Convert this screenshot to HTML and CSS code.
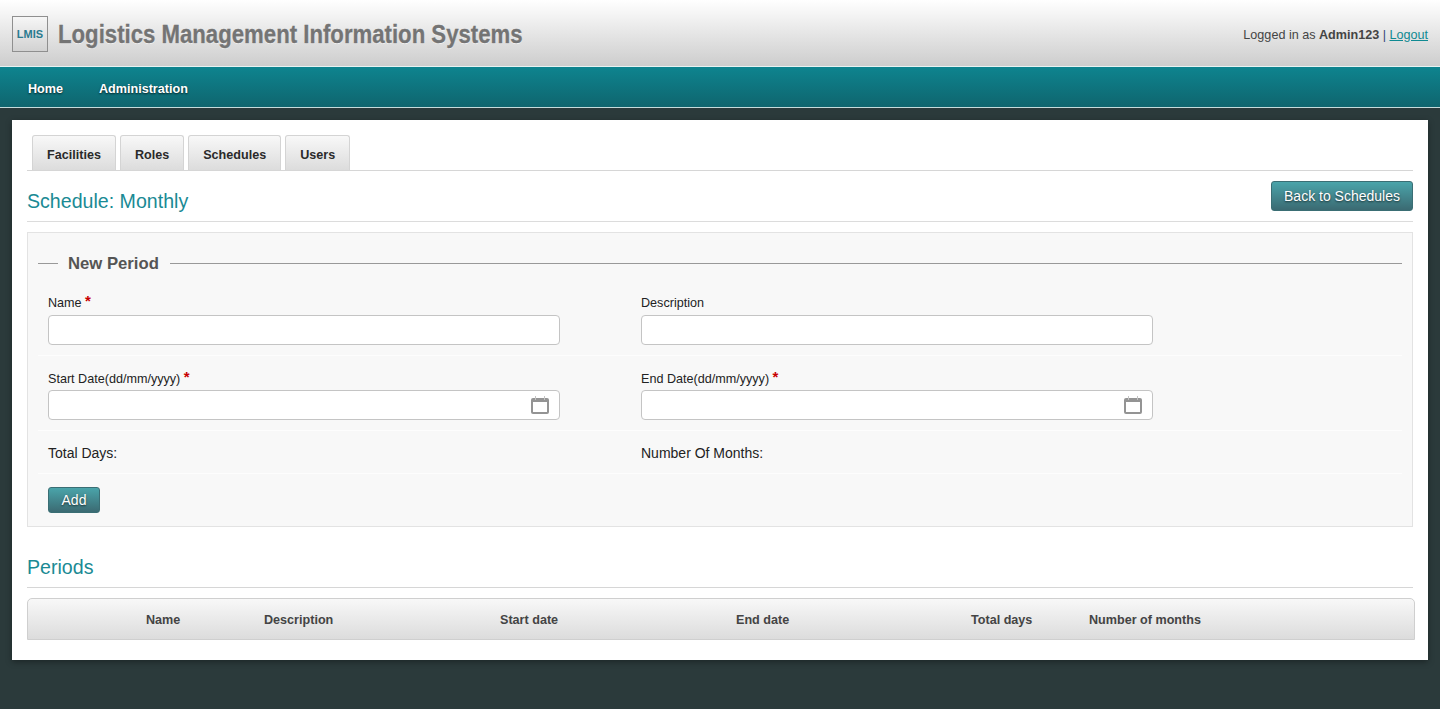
FILE: index.html
```html
<!DOCTYPE html>
<html lang="en">
<head>
<meta charset="utf-8">
<title>Logistics Management Information Systems</title>
<link rel="stylesheet" href="styles.css">
</head>
<body>
<header class="topbar">
  <div class="brand">
    <div class="logo">LMIS</div>
    <h1 class="app-title">Logistics Management Information Systems</h1>
  </div>
  <div class="user">Logged in as <strong>Admin123</strong> <span class="pipe">|</span> <a href="#">Logout</a></div>
</header>
<nav class="mainnav">
  <a href="#">Home</a>
  <a href="#">Administration</a>
</nav>
<main class="card">
  <div class="tabs">
    <a class="tab" href="#">Facilities</a>
    <a class="tab" href="#">Roles</a>
    <a class="tab" href="#">Schedules</a>
    <a class="tab" href="#">Users</a>
  </div>
  <div class="page-head">
    <h2 class="section-title">Schedule: Monthly</h2>
    <button class="btn btn-back" type="button">Back to Schedules</button>
  </div>
  <form class="panel">
    <div class="legend"><span>New Period</span></div>
    <div class="row">
      <div class="col">
        <label class="lbl">Name <b class="req">*</b></label>
        <div class="field"><input type="text"></div>
      </div>
      <div class="col">
        <label class="lbl">Description</label>
        <div class="field"><input type="text"></div>
      </div>
    </div>
    <div class="row">
      <div class="col">
        <label class="lbl">Start Date(dd/mm/yyyy) <b class="req">*</b></label>
        <div class="field"><input type="text">
          <svg class="cal" viewBox="0 0 18 18" width="18" height="18"><path fill="#949494" d="M2 2h14a2 2 0 0 1 2 2v12a2 2 0 0 1-2 2H2a2 2 0 0 1-2-2V4a2 2 0 0 1 2-2z"/><rect x="4" y="0" width="1" height="4" fill="#c4c4c4"/><rect x="13" y="0" width="1" height="4" fill="#c4c4c4"/><rect x="2" y="6" width="14" height="10" fill="#fff"/></svg>
        </div>
      </div>
      <div class="col">
        <label class="lbl">End Date(dd/mm/yyyy) <b class="req">*</b></label>
        <div class="field"><input type="text">
          <svg class="cal" viewBox="0 0 18 18" width="18" height="18"><path fill="#949494" d="M2 2h14a2 2 0 0 1 2 2v12a2 2 0 0 1-2 2H2a2 2 0 0 1-2-2V4a2 2 0 0 1 2-2z"/><rect x="4" y="0" width="1" height="4" fill="#c4c4c4"/><rect x="13" y="0" width="1" height="4" fill="#c4c4c4"/><rect x="2" y="6" width="14" height="10" fill="#fff"/></svg>
        </div>
      </div>
    </div>
    <div class="row row-info">
      <div class="col">Total Days:</div>
      <div class="col">Number Of Months:</div>
    </div>
    <div class="actions"><button class="btn btn-add" type="button">Add</button></div>
  </form>
  <h2 class="section-title periods">Periods</h2>
  <div class="thead">
    <span></span>
    <span>Name</span>
    <span>Description</span>
    <span>Start date</span>
    <span>End date</span>
    <span>Total days</span>
    <span>Number of months</span>
  </div>
</main>
</body>
</html>
```
FILE: styles.css
```css
* { box-sizing: border-box; }
html, body { height: 100%; }
body {
  margin: 0;
  background: #2b3a3b;
  font-family: "Liberation Sans", Arial, sans-serif;
  font-size: 12.6px;
  color: #333;
  overflow: hidden;
}
.topbar {
  height: 67px;
  display: flex;
  align-items: center;
  justify-content: space-between;
  padding: 1px 12px 0;
  background: linear-gradient(#fff, #cdcdcd);
  border-bottom: 1px solid #e8f2f2;
}
.brand { display: flex; align-items: center; gap: 10px; }
.logo {
  width: 36px;
  height: 36px;
  display: flex;
  align-items: center;
  justify-content: center;
  border: 1px solid #8f8f8f;
  background: linear-gradient(#f6f6f6, #d2d2d2);
  color: #2b7b8f;
  font-size: 11px;
  font-weight: bold;
}
.app-title {
  margin: 0;
  font-size: 26px;
  line-height: 30px;
  font-weight: bold;
  color: #747474;
  -webkit-text-stroke: 0.3px #747474;
  transform: scaleX(.853);
  transform-origin: left center;
  text-shadow: 0 1px 0 rgba(255, 255, 255, .6);
}
.user { color: #444; padding-top: 3px; }
.user strong { color: #444; }
.pipe { color: #334477; }
.user a { color: #0f8a92; }
.mainnav {
  height: 41px;
  display: flex;
  align-items: center;
  gap: 36px;
  padding: 4px 28px 0;
  background: linear-gradient(#0e848f, #0f656e);
  border-bottom: 1px solid #c5dcdc;
}
.mainnav a {
  color: #fff;
  font-weight: bold;
  text-decoration: none;
  text-shadow: 0 1px 2px rgba(0, 0, 0, .7);
}
.card {
  margin: 12px 12px 0;
  height: 540px;
  padding: 15px 15px 0;
  background: #fff;
  box-shadow: 0 2px 6px rgba(0, 0, 0, .35);
}
.tabs {
  display: flex;
  gap: 4px;
  height: 36px;
  padding-left: 5px;
  border-bottom: 1px solid #d6d6d6;
}
.tab {
  height: 35px;
  padding: 4px 14px 0;
  display: flex;
  align-items: center;
  border: 1px solid #d4d4d4;
  border-bottom: 0;
  border-radius: 3px 3px 0 0;
  background: linear-gradient(#f8f8f8, #dcdcdc);
  color: #2a2a2a;
  font-weight: bold;
  text-decoration: none;
}
.page-head {
  height: 51px;
  display: flex;
  justify-content: space-between;
  align-items: flex-start;
  border-bottom: 1px solid #dcdcdc;
  padding-top: 10px;
}
.section-title {
  margin: 0;
  font-size: 19.6px;
  font-weight: normal;
  line-height: 24px;
  color: #1a8a94;
}
.page-head .section-title { padding-top: 8px; }
.btn {
  border: 1px solid #3a6e74;
  border-radius: 3px;
  background: linear-gradient(#4aa4aa, #3b6a72);
  color: #fff;
  font-family: inherit;
  font-size: 14px;
  text-shadow: 0 1px 2px rgba(0, 0, 0, .6);
  padding: 0;
}
.btn-back { width: 142px; height: 30px; }
.btn-add { width: 52px; height: 26px; }
.panel {
  margin-top: 10px;
  height: 295px;
  padding: 20px 10px 13px;
  background: #f8f8f8;
  border: 1px solid #e3e3e3;
}
.legend {
  display: flex;
  align-items: center;
  height: 20px;
  margin-bottom: 8px;
  font-size: 16.7px;
  font-weight: bold;
  color: #555;
}
.legend::before {
  content: "";
  width: 20px;
  border-top: 1px solid #999;
}
.legend::after {
  content: "";
  flex: 1;
  border-top: 1px solid #999;
}
.legend span { padding: 1px 11px 0 10px; }
.row {
  display: flex;
  height: 75px;
  padding: 15px 0 0 10px;
  border-bottom: 1px solid #fdfdfd;
}
.col { width: 593px; }
.lbl {
  display: block;
  height: 19px;
  line-height: 14px;
  font-size: 12.6px;
  color: #222;
}
.row + .row .lbl { padding-top: 1px; }
.req { color: #c80000; font-size: 15px; line-height: 0; vertical-align: 1px; }
.field {
  width: 512px;
  height: 30px;
  display: flex;
  align-items: center;
  padding-right: 10px;
  background: #fff;
  border: 1px solid #c4c4c4;
  border-radius: 4px;
}
.field input {
  flex: 1;
  min-width: 0;
  height: 100%;
  border: 0;
  background: transparent;
  outline: 0;
}
.cal { flex: none; }
.row-info {
  height: 43px;
  padding: 1px 0 0 10px;
  align-items: center;
  font-size: 14px;
  color: #222;
}
.actions { padding: 13px 0 0 10px; }
.periods {
  margin-top: 28px;
  height: 33px;
  border-bottom: 1px solid #d6d6d6;
}
.thead {
  margin-top: 10px;
  width: 1388px;
  height: 42px;
  display: grid;
  grid-template-columns: 118px 118px 236px 236px 235px 118px 1fr;
  align-items: center;
  padding-top: 1px;
  background: linear-gradient(#f8f8f8, #dcdcdc);
  border: 1px solid #cfcfcf;
  border-radius: 5px 5px 0 0;
  font-weight: bold;
  color: #444;
}
```
